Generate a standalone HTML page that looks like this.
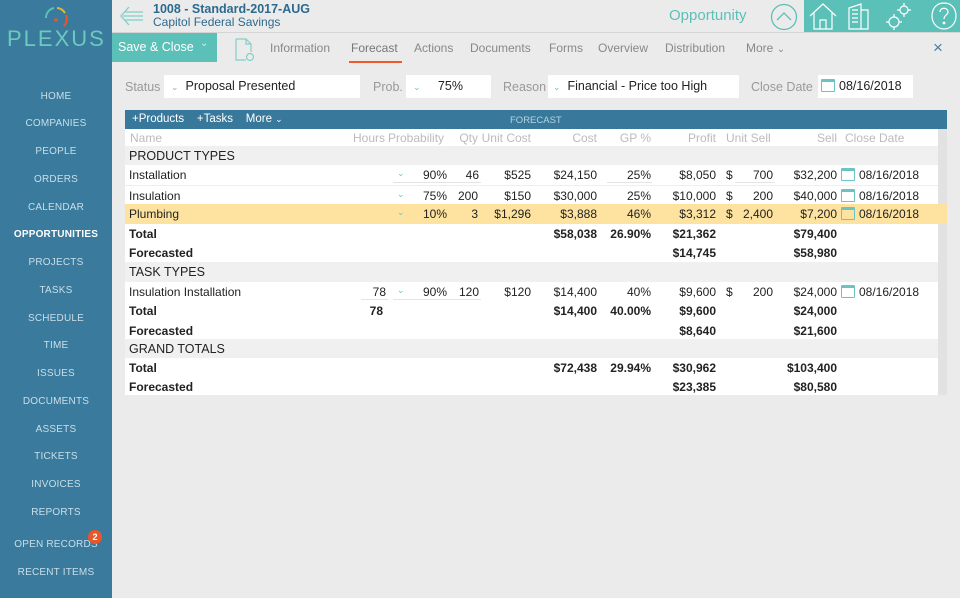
<!DOCTYPE html>
<html><head><meta charset="utf-8"><style>
*{margin:0;padding:0;box-sizing:border-box}
body{width:960px;height:598px;overflow:hidden;background:#ebebeb;font-family:"Liberation Sans",sans-serif;position:relative;color:#222}
.a{position:absolute;white-space:nowrap}
#side{position:absolute;left:0;top:0;width:112px;height:598px;background:#3a7a9c}
.nav{position:absolute;left:0;width:112px;text-align:center;font-size:10px;color:#c9dfe9;letter-spacing:.2px}
.tab{position:absolute;top:41px;font-size:12px;color:#888}
.lbl{position:absolute;top:80px;font-size:12.5px;color:#999}
.box{position:absolute;top:75px;height:23px;background:#fff;font-size:12.5px;color:#222;padding-top:4px}
.chev{color:#6cc4c0;font-size:9px}
#tbl{position:absolute;left:125px;top:129px;width:813px;height:266px;background:#fff}
.row{position:absolute;left:0;width:813px;height:19.4px;font-size:12px}
.row span{position:absolute;top:3px;white-space:nowrap}
.b{font-weight:bold}
.sec{background:#f0f0f0;font-size:12.5px}
.ul{border-bottom:1px solid #e4e4e4}
.cal{position:absolute;top:3px;width:14px;height:13px;border:1.5px solid #6cc4c0;border-top-width:3px;border-radius:1px}
</style></head><body>
<div id="side">
<svg class="a" style="left:40px;top:4px" width="32" height="26" viewBox="0 0 32 26"><path d="M6 14 A10 10 0 0 1 14 4" stroke="#5bbfb6" stroke-width="2" fill="none"/><path d="M17 4 A10 10 0 0 1 25 9" stroke="#f0b429" stroke-width="2" fill="none"/><path d="M26 11 A10 10 0 0 1 24 22" stroke="#e8562a" stroke-width="2" fill="none"/><circle cx="16" cy="16" r="1.8" fill="#e8562a"/></svg>
<div class="a" style="left:7px;top:26px;font-size:22px;color:#6cc9c0;letter-spacing:2px">PLEXUS</div>
<div class="nav" style="top:91px">HOME</div>
<div class="nav" style="top:118px">COMPANIES</div>
<div class="nav" style="top:146px">PEOPLE</div>
<div class="nav" style="top:174px">ORDERS</div>
<div class="nav" style="top:202px">CALENDAR</div>
<div class="nav" style="top:229px;color:#fff;font-weight:bold">OPPORTUNITIES</div>
<div class="nav" style="top:257px">PROJECTS</div>
<div class="nav" style="top:285px">TASKS</div>
<div class="nav" style="top:313px">SCHEDULE</div>
<div class="nav" style="top:340px">TIME</div>
<div class="nav" style="top:368px">ISSUES</div>
<div class="nav" style="top:396px">DOCUMENTS</div>
<div class="nav" style="top:424px">ASSETS</div>
<div class="nav" style="top:451px">TICKETS</div>
<div class="nav" style="top:479px">INVOICES</div>
<div class="nav" style="top:507px">REPORTS</div>
<div class="nav" style="top:539px">OPEN RECORDS</div>
<div class="a" style="left:88px;top:530px;width:14px;height:14px;border-radius:7px;background:#e8562a;color:#fff;font-size:9px;font-weight:bold;text-align:center;line-height:14px">2</div>
<div class="nav" style="top:567px">RECENT ITEMS</div>
</div>
<div class="a" style="left:112px;top:32px;width:848px;height:1px;background:#d4d4d4"></div>
<svg class="a" style="left:119px;top:5px" width="26" height="22" viewBox="0 0 26 22"><path d="M10 2 L2 11 L10 20 M6 7 H24 M4 11 H24 M6 15 H24" stroke="#7fd0c8" stroke-width="1.3" fill="none"/></svg>
<div class="a" style="left:153px;top:2px;font-size:12.5px;font-weight:bold;color:#2b6a8e">1008 - Standard-2017-AUG</div>
<div class="a" style="left:153px;top:15px;font-size:12px;color:#2b6a8e">Capitol Federal Savings</div>
<div class="a" style="left:669px;top:7px;font-size:15px;color:#5bc0b8">Opportunity</div>
<svg class="a" style="left:770px;top:3px" width="28" height="28" viewBox="0 0 28 28"><circle cx="14" cy="14" r="12.5" stroke="#5bc0b8" stroke-width="1.3" fill="none"/><path d="M7 17 L14 10 L21 17" stroke="#5bc0b8" stroke-width="1.3" fill="none"/></svg>
<div class="a" style="left:804px;top:0;width:156px;height:32px;background:#5bc0b8"></div>
<svg class="a" style="left:804px;top:0" width="156" height="32" viewBox="0 0 156 32" fill="none" stroke="#fff" stroke-width="1.2"><path d="M6 16 L19 4 L32 16 M10 13 V29 H28 V13 M16 29 V20 H22 V29"/><path d="M45 8 L57 4 V29 H45 Z M57 10 H64 V29 H57 M48 10h6M48 14h6M48 18h6M48 22h6"/><circle cx="90" cy="22" r="5"/><circle cx="100" cy="10" r="4"/><path d="M90 14v3M90 27v3M82 22h3M95 22h3M100 3v3M100 14v3M93 10h3M104 10h3"/><path d="M140 3 C148 3 152 9 152 16 C152 24 146 29 140 29 C134 29 128 24 128 16 C128 9 132 3 140 3Z"/><path d="M136 12 C136 7 144 7 144 12 C144 15 140 15 140 19"/><circle cx="140" cy="23" r=".8" fill="#fff"/></svg>
<div class="a" style="left:112px;top:33px;width:105px;height:29px;background:#5bc0b8"></div>
<div class="a" style="left:118px;top:40px;font-size:12.5px;color:#fff">Save &amp; Close</div>
<div class="a" style="left:200px;top:38px;font-size:10px;color:#d6f0ee">&#8964;</div>
<svg class="a" style="left:234px;top:37px" width="22" height="26" viewBox="0 0 22 26" fill="none" stroke="#7fd0c8" stroke-width="1.2"><path d="M2 2 H12 L17 7 V15 M2 2 V23 H12 M12 2 V7 H17"/><circle cx="16" cy="20" r="3.5"/></svg>
<div class="tab" style="left:270px">Information</div>
<div class="tab" style="left:351px;color:#777">Forecast</div>
<div class="a" style="left:349px;top:61px;width:53px;height:2px;background:#f05a28"></div>
<div class="tab" style="left:414px">Actions</div>
<div class="tab" style="left:470px">Documents</div>
<div class="tab" style="left:549px">Forms</div>
<div class="tab" style="left:598px">Overview</div>
<div class="tab" style="left:665px">Distribution</div>
<div class="tab" style="left:746px">More <span style="font-size:10px">&#8964;</span></div>
<div class="a" style="left:933px;top:38px;font-size:17px;color:#4a7f99">×</div>
<div class="lbl" style="left:125px">Status</div>
<div class="box" style="left:164px;width:196px;padding-left:7px"><span class="chev">&#8964;</span>&nbsp; Proposal Presented</div>
<div class="lbl" style="left:373px">Prob.</div>
<div class="box" style="left:406px;width:85px;padding-left:7px"><span class="chev">&#8964;</span>&nbsp;&nbsp;&nbsp;&nbsp; 75%</div>
<div class="lbl" style="left:503px">Reason</div>
<div class="box" style="left:548px;width:191px;padding-left:5px"><span class="chev">&#8964;</span>&nbsp; Financial - Price too High</div>
<div class="lbl" style="left:751px">Close Date</div>
<div class="box" style="left:818px;width:95px;padding-left:21px">08/16/2018</div>
<div class="cal" style="left:821px;top:79px"></div>
<div class="a" style="left:938px;top:129px;width:9px;height:266px;background:#e2e2e2"></div>
<div id="tbl">
<div class="row" style="top:0;height:17px;color:#bbb"><span style="left:5px;top:2px">Name</span><span style="right:553px;top:2px">Hours</span><span style="left:263px;top:2px">Probability</span><span style="right:460px;top:2px">Qty</span><span style="right:407px;top:2px">Unit Cost</span><span style="right:341px;top:2px">Cost</span><span style="right:287px;top:2px">GP %</span><span style="right:222px;top:2px">Profit</span><span style="left:601px;top:2px">Unit Sell</span><span style="right:101px;top:2px">Sell</span><span style="left:720px;top:2px">Close Date</span></div>
<div class="row sec" style="top:17px"><span style="left:4px">PRODUCT TYPES</span></div>
<div class="row" style="top:36.4px"><span style="left:4px">Installation</span><span class="chev" style="left:272px">&#8964;</span><span class="ul" style="left:268px;width:62px;text-align:right;padding-right:8px">90%</span><span class="ul" style="left:328px;width:28px;text-align:right;padding-right:2px">46</span><span style="right:407px">$525</span><span style="right:341px">$24,150</span><span class="ul" style="left:482px;width:45px;text-align:right;padding-right:1px">25%</span><span style="right:222px">$8,050</span><span style="left:601px">$</span><span class="ul" style="left:610px;width:40px;text-align:right;padding-right:2px">700</span><span style="right:101px">$32,200</span><span class="cal" style="left:716px"></span><span style="left:734px">08/16/2018</span></div>
<div class="row" style="top:55.8px;border-top:1px solid #eee"><span style="left:4px">Insulation</span><span class="chev" style="left:272px">&#8964;</span><span style="left:268px;width:62px;text-align:right;padding-right:8px">75%</span><span style="right:460px">200</span><span style="right:407px">$150</span><span style="right:341px">$30,000</span><span style="right:287px">25%</span><span style="right:222px">$10,000</span><span style="left:601px">$</span><span style="right:165px">200</span><span style="right:101px">$40,000</span><span class="cal" style="left:716px"></span><span style="left:734px">08/16/2018</span></div>
<div class="row" style="top:75.2px;background:#fde39f;width:822px"><span style="left:4px">Plumbing</span><span class="chev" style="left:272px">&#8964;</span><span style="left:268px;width:62px;text-align:right;padding-right:8px">10%</span><span style="right:469px">3</span><span style="right:416px">$1,296</span><span style="right:350px">$3,888</span><span style="right:296px">46%</span><span style="right:231px">$3,312</span><span style="left:601px">$</span><span style="right:174px">2,400</span><span style="right:110px">$7,200</span><span class="cal" style="left:716px"></span><span style="left:734px">08/16/2018</span></div>
<div class="row b" style="top:94.6px"><span style="left:4px">Total</span><span style="right:341px">$58,038</span><span style="right:287px">26.90%</span><span style="right:222px">$21,362</span><span style="right:101px">$79,400</span></div>
<div class="row b" style="top:114px"><span style="left:4px">Forecasted</span><span style="right:222px">$14,745</span><span style="right:101px">$58,980</span></div>
<div class="row sec" style="top:133.4px;height:19.6px"><span style="left:4px">TASK TYPES</span></div>
<div class="row" style="top:153px"><span style="left:4px">Insulation Installation</span><span class="ul" style="left:236px;width:27px;text-align:right;padding-right:2px">78</span><span class="chev" style="left:272px">&#8964;</span><span class="ul" style="left:268px;width:62px;text-align:right;padding-right:8px">90%</span><span class="ul" style="left:328px;width:28px;text-align:right;padding-right:2px">120</span><span style="right:407px">$120</span><span style="right:341px">$14,400</span><span style="right:287px">40%</span><span style="right:222px">$9,600</span><span style="left:601px">$</span><span style="right:165px">200</span><span style="right:101px">$24,000</span><span class="cal" style="left:716px"></span><span style="left:734px">08/16/2018</span></div>
<div class="row b" style="top:172.4px"><span style="left:4px">Total</span><span style="right:555px">78</span><span style="right:341px">$14,400</span><span style="right:287px">40.00%</span><span style="right:222px">$9,600</span><span style="right:101px">$24,000</span></div>
<div class="row b" style="top:191.8px"><span style="left:4px">Forecasted</span><span style="right:222px">$8,640</span><span style="right:101px">$21,600</span></div>
<div class="row sec" style="top:210px;height:19.4px"><span style="left:4px">GRAND TOTALS</span></div>
<div class="row b" style="top:229.4px"><span style="left:4px">Total</span><span style="right:341px">$72,438</span><span style="right:287px">29.94%</span><span style="right:222px">$30,962</span><span style="right:101px">$103,400</span></div>
<div class="row b" style="top:248px"><span style="left:4px">Forecasted</span><span style="right:222px">$23,385</span><span style="right:101px">$80,580</span></div>
</div>
<div class="a" style="left:125px;top:110px;width:822px;height:19px;background:#37789b"></div>
<div class="a" style="left:132px;top:113px;font-size:11.5px;color:#fff">+Products&nbsp;&nbsp;&nbsp; +Tasks&nbsp;&nbsp;&nbsp; More <span style="font-size:9px">&#8964;</span></div>
<div class="a" style="left:510px;top:115px;font-size:9.5px;color:#b7d3e2">FORECAST</div>
</body></html>
